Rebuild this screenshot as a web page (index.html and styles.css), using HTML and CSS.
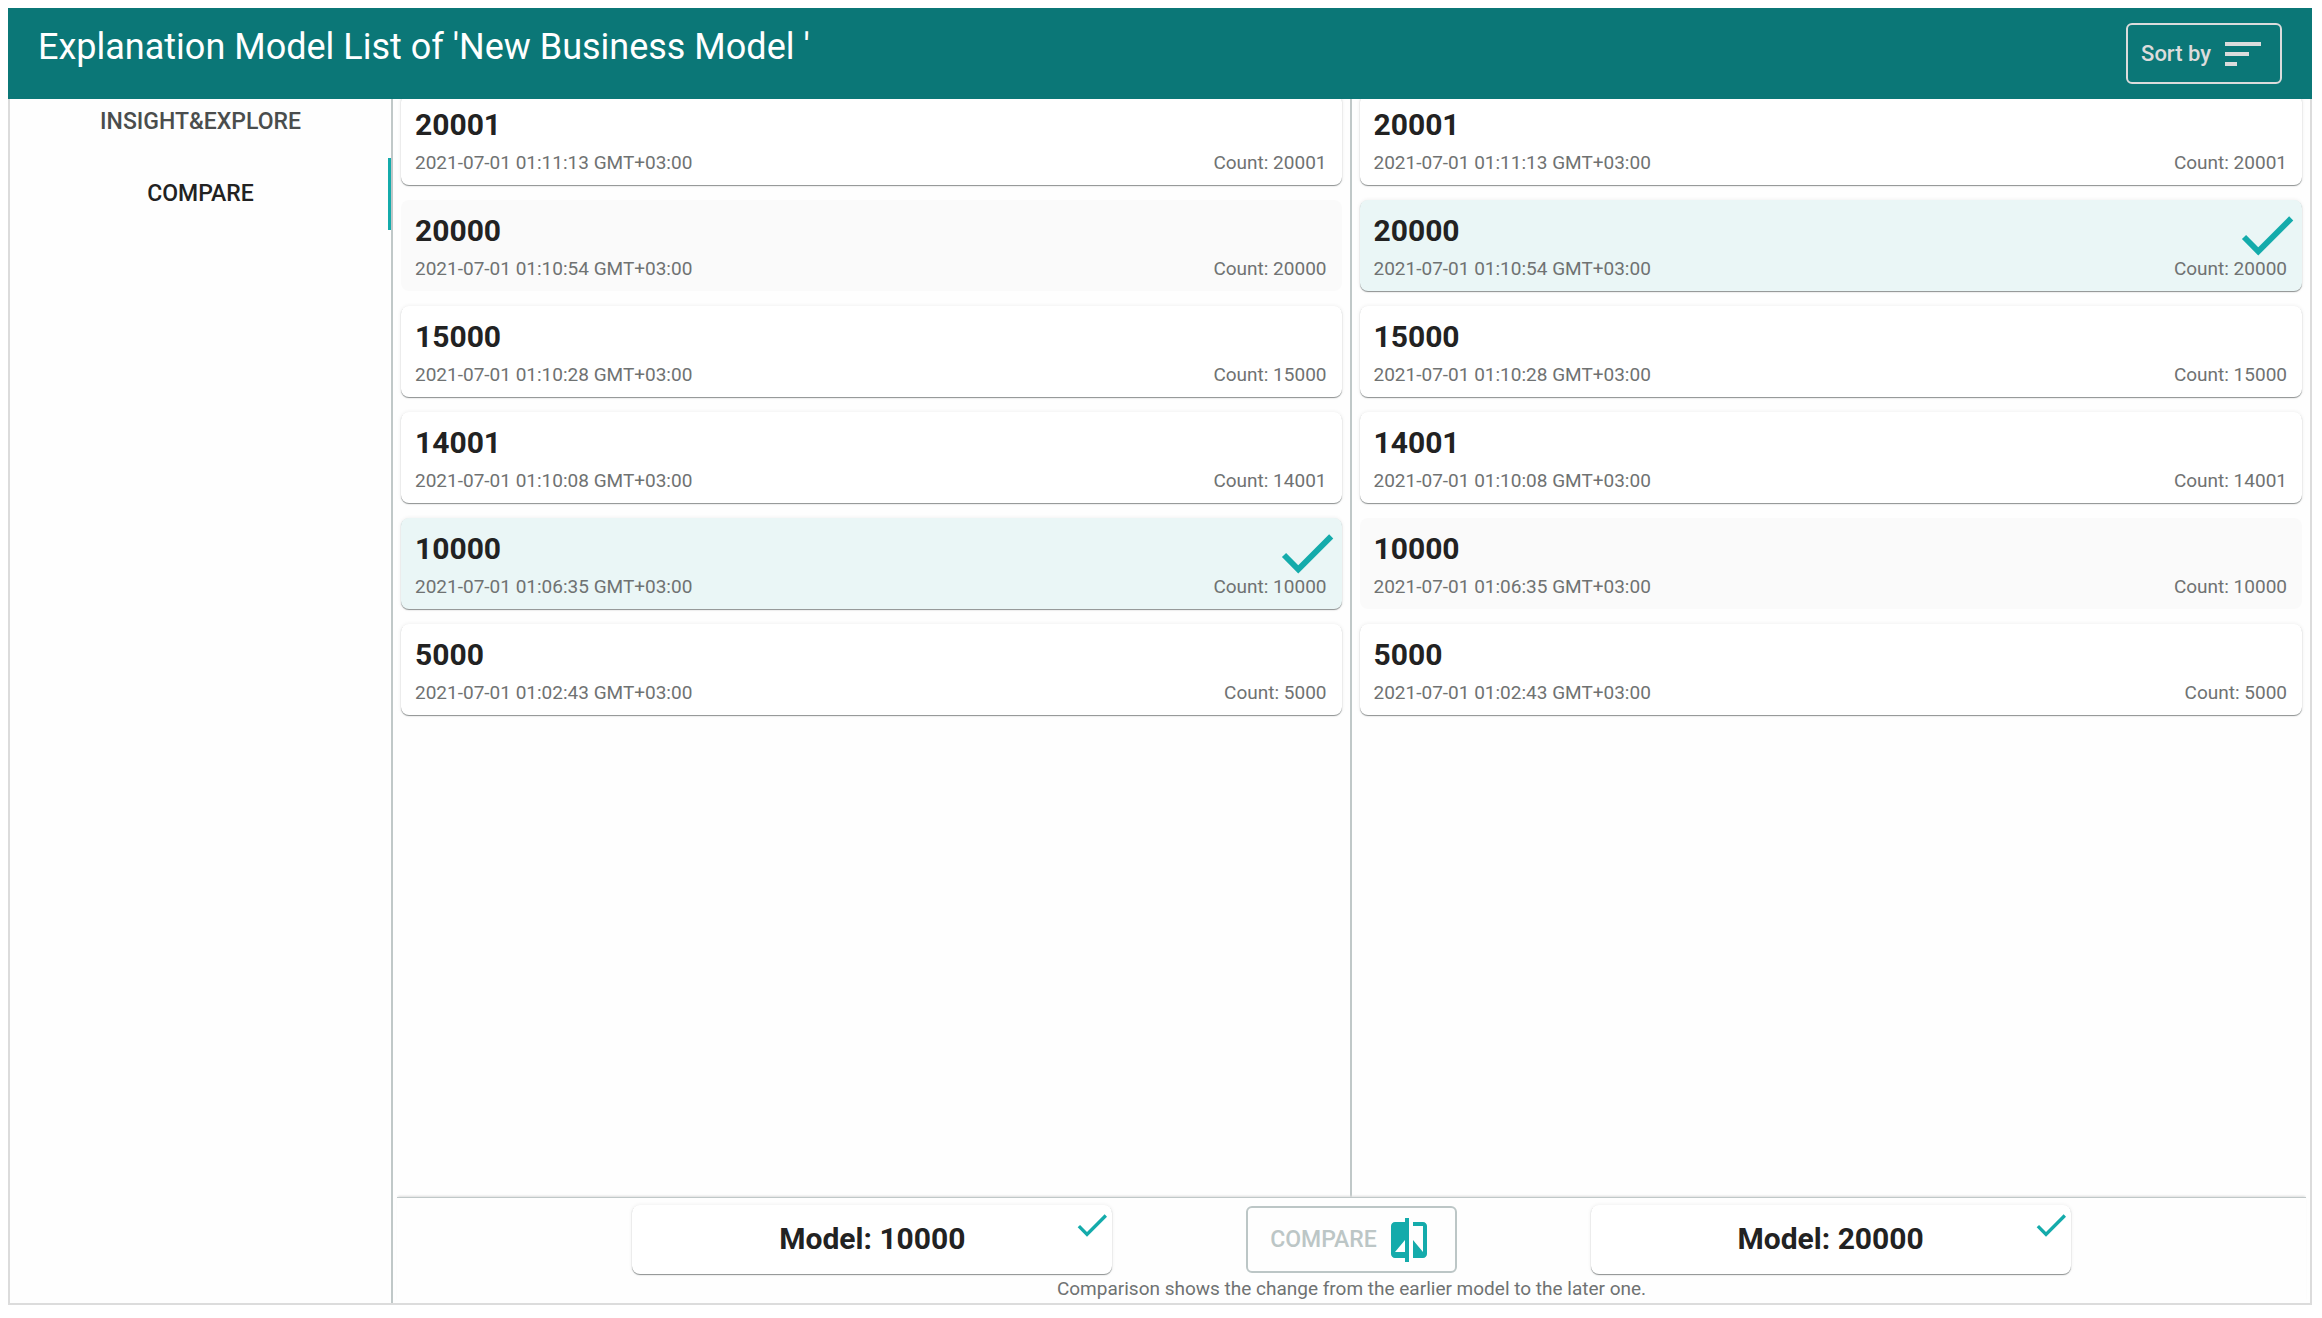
FILE: index.html
```html
<!DOCTYPE html>
<html lang="en">
<head>
  <meta charset="utf-8">
  <title>Explanation Model List</title>
  <link rel="stylesheet" href="styles.css">
</head>
<body>
  <svg class="sprite" aria-hidden="true">
    <symbol id="check" viewBox="0 0 24 24"><path d="M9 16.17L4.83 12l-1.42 1.41L9 19 21 7l-1.41-1.41z"/></symbol>
  </svg>

  <header class="header">
    <h1>Explanation Model List of 'New Business Model '</h1>
    <button class="sort">
      Sort by
      <svg viewBox="0 0 24 24"><path d="M3 18h6v-2H3v2zM3 6v2h18V6H3zm0 7h12v-2H3v2z"/></svg>
    </button>
  </header>

  <main class="main">
    <nav class="nav">
      <a href="#">INSIGHT&amp;EXPLORE</a>
      <a href="#" class="active">COMPARE</a>
    </nav>

    <div class="content">
      <div class="columns">
        <div class="list" id="left">
          <button class="card">
            <span class="name">20001</span>
            <span class="info"><span>2021-07-01 01:11:13 GMT+03:00</span><span>Count: 20001</span></span>
          </button>
          <button class="card" disabled>
            <span class="name">20000</span>
            <span class="info"><span>2021-07-01 01:10:54 GMT+03:00</span><span>Count: 20000</span></span>
          </button>
          <button class="card">
            <span class="name">15000</span>
            <span class="info"><span>2021-07-01 01:10:28 GMT+03:00</span><span>Count: 15000</span></span>
          </button>
          <button class="card">
            <span class="name">14001</span>
            <span class="info"><span>2021-07-01 01:10:08 GMT+03:00</span><span>Count: 14001</span></span>
          </button>
          <button class="card selected">
            <span class="name">10000</span>
            <span class="info"><span>2021-07-01 01:06:35 GMT+03:00</span><span>Count: 10000</span></span>
            <svg class="check"><use href="#check"/></svg>
          </button>
          <button class="card">
            <span class="name">5000</span>
            <span class="info"><span>2021-07-01 01:02:43 GMT+03:00</span><span>Count: 5000</span></span>
          </button>
        </div>

        <div class="list" id="right">
          <button class="card">
            <span class="name">20001</span>
            <span class="info"><span>2021-07-01 01:11:13 GMT+03:00</span><span>Count: 20001</span></span>
          </button>
          <button class="card selected">
            <span class="name">20000</span>
            <span class="info"><span>2021-07-01 01:10:54 GMT+03:00</span><span>Count: 20000</span></span>
            <svg class="check"><use href="#check"/></svg>
          </button>
          <button class="card">
            <span class="name">15000</span>
            <span class="info"><span>2021-07-01 01:10:28 GMT+03:00</span><span>Count: 15000</span></span>
          </button>
          <button class="card">
            <span class="name">14001</span>
            <span class="info"><span>2021-07-01 01:10:08 GMT+03:00</span><span>Count: 14001</span></span>
          </button>
          <button class="card" disabled>
            <span class="name">10000</span>
            <span class="info"><span>2021-07-01 01:06:35 GMT+03:00</span><span>Count: 10000</span></span>
          </button>
          <button class="card">
            <span class="name">5000</span>
            <span class="info"><span>2021-07-01 01:02:43 GMT+03:00</span><span>Count: 5000</span></span>
          </button>
        </div>
      </div>

      <footer class="footer">
        <div class="choice">
          <div class="model">Model: 10000<svg class="check"><use href="#check"/></svg></div>
          <button class="compare">
            COMPARE
            <svg viewBox="0 0 24 24"><path d="M10 3H5c-1.1 0-2 .9-2 2v14c0 1.1.9 2 2 2h5v2h2V1h-2v2zm0 15H5l5-6v6zm9-15h-5v2h5v13l-5-6v9h5c1.1 0 2-.9 2-2V5c0-1.1-.9-2-2-2z"/></svg>
          </button>
          <div class="model">Model: 20000<svg class="check"><use href="#check"/></svg></div>
        </div>
        <p>Comparison shows the change from the earlier model to the later one.</p>
      </footer>
    </div>
  </main>
</body>
</html>
```
FILE: styles.css
```css
* {
  box-sizing: border-box;
}
body {
  display: flex;
  flex-direction: column;
  height: 100vh;
  margin: 0;
  padding: 8px 10px 13px 8px;
  background: #fff;
  color: #222;
  font-family: Roboto, sans-serif;
}
button {
  font-family: inherit;
  cursor: pointer;
}
svg {
  fill: currentColor;
}
.sprite {
  display: none;
}

/* header */
.header {
  position: relative;
  z-index: 1;
  display: flex;
  justify-content: space-between;
  align-items: flex-start;
  height: 91px;
  padding: 15px 30px;
  background: #0b7777;
  color: #fff;
}
h1 {
  margin: 0;
  font-size: 36px;
  font-weight: 400;
  line-height: 48px;
}
.sort {
  display: flex;
  align-items: center;
  gap: 8px;
  height: 61px;
  padding: 0 13px;
  border: 2px solid #dcdcdc;
  border-radius: 6px;
  background: none;
  color: #dcdcdc;
  font-size: 22px;
  font-weight: 500;
}
.sort svg, .compare svg {
  width: 48px;
  height: 48px;
}

.main {
  display: flex;
  flex: 1;
  min-height: 0;
  margin-top: -13px;
  border: 2px solid #dcdcdc;
  border-top: none;
  background: #fefefe;
}
.nav {
  width: 383px;
  border-right: 2px solid #c0c8c8;
}
.nav a {
  display: block;
  color: #4a4d4d;
  font-size: 23px;
  font-weight: 500;
  line-height: 72px;
  text-align: center;
  text-decoration: none;
}
.nav .active {
  box-shadow: inset -3px 0 #14abab;
  color: #222;
}
.content {
  display: flex;
  flex: 1;
  flex-direction: column;
}
.columns {
  display: grid;
  flex: 1;
  grid-template-columns: 1fr 1fr;
  min-height: 0;
}
.list {
  display: flex;
  flex-direction: column;
  gap: 15px;
  padding: 8px;
}
#left {
  border-right: 2px solid #c0c8c8;
}

/* cards */
.card, .model {
  position: relative;
  border: none;
  border-radius: 8px;
  background: #fff;
  box-shadow: 0 1px 1px #8c9090, 0 0 4px #eee;
  color: #222;
}
.card {
  display: flex;
  flex-direction: column;
  gap: 8px;
  padding: 13px 15px 10px 14px;
  text-align: left;
}
.card:disabled {
  background: #fafafa;
  box-shadow: none;
}
.selected {
  background: #eaf6f6;
}
.name, .model {
  font-size: 30px;
  font-weight: 700;
  line-height: 36px;
}
.info {
  display: flex;
  justify-content: space-between;
  width: 100%;
  color: #6f7272;
  font-size: 19px;
  line-height: 24px;
}
.check {
  position: absolute;
  top: 0;
  right: 0;
  width: 70px;
  height: 70px;
  color: #14abab;
}

/* footer */
.footer {
  margin: 0 4px;
  padding: 7px 0 2px;
  border-top: 1px solid #c0c8c8;
  box-shadow: 0 -2px 2px -1px #dcdcdc;
}
.choice {
  display: flex;
  justify-content: center;
  align-items: center;
  gap: 7%;
}
.model {
  width: 480px;
  padding: 16px 0 17px;
  text-align: center;
}
.model .check {
  width: 40px;
  height: 40px;
}
.compare {
  display: flex;
  align-items: center;
  justify-content: center;
  gap: 8px;
  width: 211px;
  height: 67px;
  border: 2px solid #bcc6c6;
  border-radius: 6px;
  background: none;
  color: #bcc6c6;
  font-size: 23px;
  font-weight: 500;
}
.compare svg {
  color: #14abab;
}
.footer p {
  margin: 3px 0 0;
  color: #6f7272;
  font-size: 19px;
  line-height: 24px;
  text-align: center;
}
```
